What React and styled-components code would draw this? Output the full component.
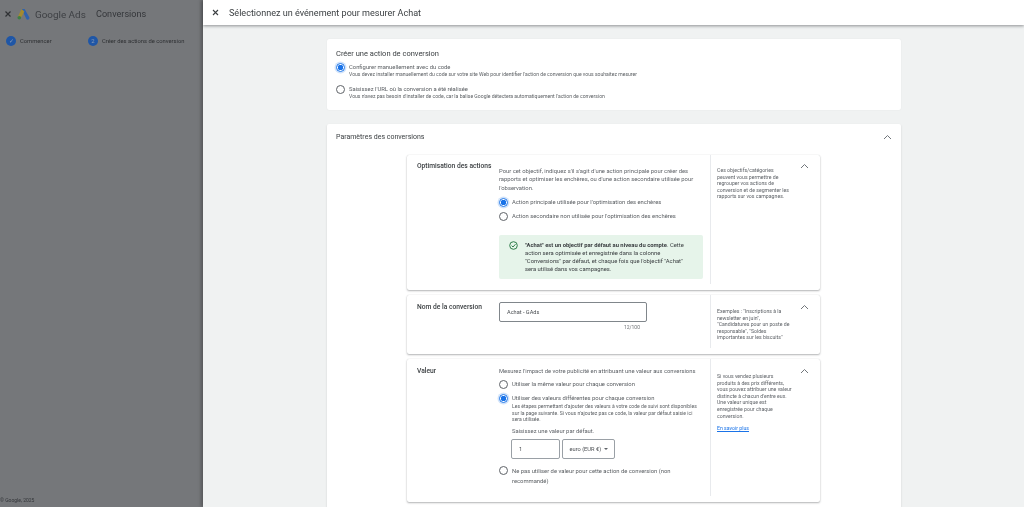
import React from 'react';
import styled, { createGlobalStyle } from 'styled-components';

const GlobalStyle = createGlobalStyle`
  html, body { margin: 0; padding: 0; height: 100%; overflow: hidden; }
  body { font-family: Roboto, "Liberation Sans", sans-serif; color: #3c4043; }
  * { box-sizing: border-box; }
`;

const Page = styled.div`
  display: flex;
  width: 1024px;
  height: 507px;
  overflow: hidden;
  background: #75777a;
  filter: blur(0.3px);
`;

const Side = styled.aside`
  width: 203px;
  flex: none;
  display: flex;
  flex-direction: column;
  color: #36383b;
`;

const SideTop = styled.div`
  height: 28px;
  display: flex;
  align-items: center;
  padding-left: 4px;
`;

const BrandName = styled.span`
  font-size: 9.9px;
  color: #3e4044;
  margin-left: 5px;
  width: 61px;
  white-space: nowrap;
`;

const SideTitle = styled.span`
  font-size: 9.1px;
  color: #34363a;
`;

const Steps = styled.div`
  display: flex;
  align-items: center;
  height: 26px;
  padding-left: 6px;
`;

const StepDot = styled.span`
  width: 10px;
  height: 10px;
  border-radius: 50%;
  flex: none;
  background: #1f56a6;
  color: #8b9db8;
  font-size: 6px;
  line-height: 10px;
  text-align: center;
`;

const StepLabel = styled.span`
  font-size: 5.8px;
  color: #2e3033;
  margin-left: 4px;
  width: ${p => p.$w}px;
  white-space: nowrap;
`;

const SideFill = styled.div`
  flex: 1;
`;

const Legal = styled.div`
  font-size: 5px;
  color: #34363a;
  padding: 0 0 4px 0;
`;

const Main = styled.main`
  flex: 1;
  min-width: 0;
  display: flex;
  flex-direction: column;
  background: #f0f2f2;
  box-shadow: -2px 0 3px rgba(50, 50, 50, 0.45);
  position: relative;
`;

const Header = styled.header`
  height: 25px;
  flex: none;
  background: #fff;
  display: flex;
  align-items: center;
  padding-left: 9px;
  box-shadow: 0 1px 3px rgba(60, 64, 67, 0.55);
  position: relative;
  z-index: 1;
  font-size: 9.05px;
  color: #3c4043;
`;

const HeaderTitle = styled.h1`
  margin: 0 0 0 10px;
  font-size: inherit;
  font-weight: 400;
  white-space: nowrap;
`;

const Content = styled.div`
  flex: 1;
  display: flex;
  flex-direction: column;
  align-items: flex-start;
  padding: 14px 0 0 124px;
  gap: 14px;
  overflow: hidden;
`;

const Card = styled.section`
  width: 574px;
  flex: none;
  background: #fff;
  border-radius: 2px;
  box-shadow: 0 0 1px rgba(60, 64, 67, 0.12);
`;

const CreateCard = styled(Card)`
  height: 71px;
  padding: 9px 9px 0;
`;

const CardTitle = styled.h2`
  margin: 0 0 4px;
  font-size: 7.5px;
  line-height: 11px;
  font-weight: 400;
  color: #3c4043;
`;

const OptionRow = styled.div`
  display: flex;
  align-items: flex-start;
  gap: 4px;
  margin-bottom: ${p => p.$gap || 0}px;
`;

const RadioMark = styled.span`
  width: 9px;
  height: 9px;
  flex: none;
  border-radius: 50%;
  border: 1px solid ${p => (p.$on ? '#1a73e8' : '#5f6368')};
  background: ${p => (p.$on ? 'radial-gradient(circle, #1a73e8 0 2.6px, #fff 3px)' : '#fff')};
  box-shadow: ${p => (p.$on ? '0 0 0 1.5px rgba(26, 115, 232, 0.2)' : 'none')};
`;

const OptionText = styled.div`
  min-width: 0;
`;

const OptionLabel = styled.div`
  font-size: 5.85px;
  line-height: 8px;
  color: #5a5e62;
  white-space: nowrap;
`;

const OptionHint = styled.div`
  font-size: 5.1px;
  line-height: 6.5px;
  color: #5a5e62;
  white-space: nowrap;
`;

const WrappedHint = styled.p`
  margin: 1px 0 0;
  width: 188px;
  font-size: 5.1px;
  line-height: 6.5px;
  color: #5a5e62;
`;

const SettingsCard = styled(Card)`
  height: 400px;
  padding: 8px 9px 0 0;
  box-shadow: 0 1px 2px rgba(60, 64, 67, 0.2);
`;

const SettingsHead = styled.div`
  display: flex;
  justify-content: space-between;
  align-items: center;
  height: 10px;
  padding-left: 9px;
  margin-bottom: 13px;
`;

const SettingsTitle = styled.h2`
  margin: 0;
  font-size: 7px;
  font-weight: 400;
  color: #3c4043;
`;

const Chevron = styled.svg`
  width: 9px;
  height: 6px;
  flex: none;
  fill: none;
  stroke: #70757a;
  stroke-width: 1;
`;

const Panels = styled.div`
  display: flex;
  flex-direction: column;
  gap: 5px;
  margin-left: 80px;
  width: 413px;
`;

const Panel = styled.article`
  display: grid;
  grid-template-columns: 92px 211px 1fr;
  height: ${p => p.$h}px;
  background: #fff;
  border-radius: 2px;
  box-shadow: 0 1px 2px rgba(60, 64, 67, 0.38), 0 0 1px rgba(60, 64, 67, 0.2);
`;

const PanelLabel = styled.h3`
  margin: 0;
  padding: ${p => p.$top}px 0 0 10px;
  font-size: 6.7px;
  line-height: 9px;
  font-weight: 500;
  color: #3c4043;
  white-space: nowrap;
`;

const PanelBody = styled.div`
  padding-top: ${p => p.$top}px;
  min-width: 0;
`;

const Paragraph = styled.p`
  margin: 0 0 ${p => p.$after || 0}px;
  font-size: 5.85px;
  line-height: 8.4px;
  color: #5f6368;
`;

const Options = styled.div`
  display: flex;
  flex-direction: column;
`;

const Notice = styled.div`
  margin: 14px 7px 0 0;
  height: 44px;
  background: #e6f4ea;
  border-radius: 2px;
  display: flex;
  padding: 6px 18px 0 10px;
  gap: 7px;
`;

const NoticeIcon = styled.svg`
  width: 9px;
  height: 9px;
  flex: none;
  fill: none;
  stroke: #2f7d4a;
  stroke-width: 1;
`;

const NoticeText = styled.p`
  margin: 0;
  font-size: 5.85px;
  line-height: 8px;
  color: #3c4043;
  strong { font-weight: 700; }
`;

const Aside = styled.div`
  margin-bottom: 6px;
  border-left: 1px solid #e8eaed;
  padding: ${p => p.$top}px 6px 0 6px;
  position: relative;
`;

const AsideText = styled.p`
  margin: 0;
  width: 75px;
  font-size: 5.2px;
  line-height: 6.6px;
  color: #5f6368;
`;

const AsideLink = styled.a`
  display: block;
  margin-top: 6px;
  font-size: 5.2px;
  color: #1a73e8;
  text-decoration: underline;
`;

const PanelChevron = styled(Chevron)`
  position: absolute;
  top: ${p => p.$top}px;
  right: 11px;
`;

const NameField = styled.div`
  width: 148px;
  height: 20px;
  border: 1px solid #80868b;
  border-radius: 2px;
  font-size: 5.6px;
  line-height: 18px;
  padding-left: 7px;
  color: #4b4f53;
`;

const Counter = styled.div`
  width: 141px;
  text-align: right;
  margin-top: 1px;
  font-size: 5px;
  line-height: 8px;
  color: #6f7377;
`;

const DefaultLabel = styled.div`
  font-size: 5.85px;
  line-height: 8px;
  color: #5f6368;
  margin: 4px 0 4px 13px;
`;

const AmountRow = styled.div`
  display: flex;
  gap: 1.5px;
  margin: 0 0 7px 12px;
`;

const AmountBox = styled.div`
  width: ${p => p.$w}px;
  height: 20px;
  border: 1px solid #9aa0a6;
  border-radius: 2px;
  padding-left: 7px;
  font-size: 5.7px;
  line-height: 18px;
  color: #4b4f53;
  white-space: nowrap;
`;

const Caret = styled.span`
  display: inline-block;
  margin-left: 3px;
  vertical-align: 1px;
  border-left: 2px solid transparent;
  border-right: 2px solid transparent;
  border-top: 2px solid #5f6368;
`;

const WrapLabel = styled(OptionLabel)`
  white-space: normal;
  line-height: 10px;
  width: 170px;
`;

const Up = ({ top }) => (
  <PanelChevron $top={top} viewBox="0 0 9 6"><path d="M1 5 L4.5 1.5 L8 5" /></PanelChevron>
);

const Radio = ({ on, label, hint, gap }) => (
  <OptionRow $gap={gap}>
    <RadioMark $on={on} />
    <OptionText>
      <OptionLabel>{label}</OptionLabel>
      {hint && <OptionHint>{hint}</OptionHint>}
    </OptionText>
  </OptionRow>
);

export default function App() {
  return (
    <Page>
      <GlobalStyle />
      <Side>
        <SideTop>
          <svg width="8" height="8" viewBox="0 0 8 8" fill="none" stroke="#2f3134" strokeWidth="1.2"><path d="M1.5 1.5 L6.5 6.5 M6.5 1.5 L1.5 6.5" /></svg>
          <svg width="13" height="12" viewBox="0 0 13 12" style={{ marginLeft: 5 }}>
            <path d="M4.6 1 L7.6 1 L12.4 9.6 A1.7 1.7 0 0 1 9.4 11 Z" fill="#2f62ad" />
            <path d="M4.6 1 L7.4 3.4 L3.6 10.6 L0.8 9 Z" fill="#a38a2f" />
            <circle cx="2.3" cy="9.7" r="1.8" fill="#3f7d45" />
          </svg>
          <BrandName>Google Ads</BrandName>
          <SideTitle>Conversions</SideTitle>
        </SideTop>
        <Steps>
          <StepDot>✓</StepDot>
          <StepLabel $w={68}>Commencer</StepLabel>
          <StepDot>2</StepDot>
          <StepLabel $w={90}>Créer des actions de conversion</StepLabel>
        </Steps>
        <SideFill />
        <Legal>© Google, 2025</Legal>
      </Side>
      <Main>
        <Header>
          <svg width="7" height="7" viewBox="0 0 7 7" fill="none" stroke="#3c4043" strokeWidth="1.1"><path d="M1 1 L6 6 M6 1 L1 6" /></svg>
          <HeaderTitle>Sélectionnez un événement pour mesurer Achat</HeaderTitle>
        </Header>
        <Content>
          <CreateCard>
            <CardTitle>Créer une action de conversion</CardTitle>
            <Radio on gap={7} label="Configurer manuellement avec du code" hint="Vous devez installer manuellement du code sur votre site Web pour identifier l'action de conversion que vous souhaitez mesurer" />
            <Radio label="Saisissez l'URL où la conversion a été réalisée" hint="Vous n'avez pas besoin d'installer de code, car la balise Google détectera automatiquement l'action de conversion" />
          </CreateCard>
          <SettingsCard>
            <SettingsHead>
              <SettingsTitle>Paramètres des conversions</SettingsTitle>
              <Chevron viewBox="0 0 9 6"><path d="M1 5 L4.5 1.5 L8 5" /></Chevron>
            </SettingsHead>
            <Panels>
              <Panel $h={135}>
                <PanelLabel $top={7}>Optimisation des actions</PanelLabel>
                <PanelBody $top={12}>
                  <Paragraph $after={6}>Pour cet objectif, indiquez s'il s'agit d'une action principale pour créer des rapports et optimiser les enchères, ou d'une action secondaire utilisée pour l'observation.</Paragraph>
                  <Options>
                    <Radio on gap={5} label="Action principale utilisée pour l'optimisation des enchères" />
                    <Radio label="Action secondaire non utilisée pour l'optimisation des enchères" />
                  </Options>
                  <Notice>
                    <NoticeIcon viewBox="0 0 9 9"><circle cx="4.5" cy="4.5" r="3.8" /><path d="M2.6 4.6 L4 6 L6.5 3.2" /></NoticeIcon>
                    <NoticeText><strong>"Achat" est un objectif par défaut au niveau du compte</strong>. Cette action sera optimisée et enregistrée dans la colonne "Conversions" par défaut, et chaque fois que l'objectif "Achat" sera utilisé dans vos campagnes.</NoticeText>
                  </Notice>
                </PanelBody>
                <Aside $top={12}>
                  <AsideText>Ces objectifs/catégories peuvent vous permettre de regrouper vos actions de conversion et de segmenter les rapports sur vos campagnes.</AsideText>
                  <Up top={8} />
                </Aside>
              </Panel>
              <Panel $h={59}>
                <PanelLabel $top={8}>Nom de la conversion</PanelLabel>
                <PanelBody $top={7}>
                  <NameField>Achat - GAds</NameField>
                  <Counter>12/100</Counter>
                </PanelBody>
                <Aside $top={13}>
                  <AsideText>Exemples : "Inscriptions à la newsletter en juin", "Candidatures pour un poste de responsable", "Soldes importantes sur les biscuits"</AsideText>
                  <Up top={9} />
                </Aside>
              </Panel>
              <Panel $h={143}>
                <PanelLabel $top={8}>Valeur</PanelLabel>
                <PanelBody $top={8}>
                  <Paragraph $after={5}>Mesurez l'impact de votre publicité en attribuant une valeur aux conversions</Paragraph>
                  <Options>
                    <Radio gap={5} label="Utiliser la même valeur pour chaque conversion" />
                    <OptionRow>
                      <RadioMark $on />
                      <OptionText>
                        <OptionLabel>Utiliser des valeurs différentes pour chaque conversion</OptionLabel>
                        <WrappedHint>Les étapes permettant d'ajouter des valeurs à votre code de suivi sont disponibles sur la page suivante. Si vous n'ajoutez pas ce code, la valeur par défaut saisie ici sera utilisée.</WrappedHint>
                      </OptionText>
                    </OptionRow>
                    <DefaultLabel>Saisissez une valeur par défaut.</DefaultLabel>
                    <AmountRow>
                      <AmountBox $w={49}>1</AmountBox>
                      <AmountBox $w={53}>euro (EUR €)<Caret /></AmountBox>
                    </AmountRow>
                    <OptionRow>
                      <RadioMark />
                      <WrapLabel>Ne pas utiliser de valeur pour cette action de conversion (non recommandé)</WrapLabel>
                    </OptionRow>
                  </Options>
                </PanelBody>
                <Aside $top={14}>
                  <AsideText>Si vous vendez plusieurs produits à des prix différents, vous pouvez attribuer une valeur distincte à chacun d'entre eux. Une valeur unique est enregistrée pour chaque conversion.</AsideText>
                  <AsideLink>En savoir plus</AsideLink>
                  <Up top={9} />
                </Aside>
              </Panel>
            </Panels>
          </SettingsCard>
        </Content>
      </Main>
    </Page>
  );
}
